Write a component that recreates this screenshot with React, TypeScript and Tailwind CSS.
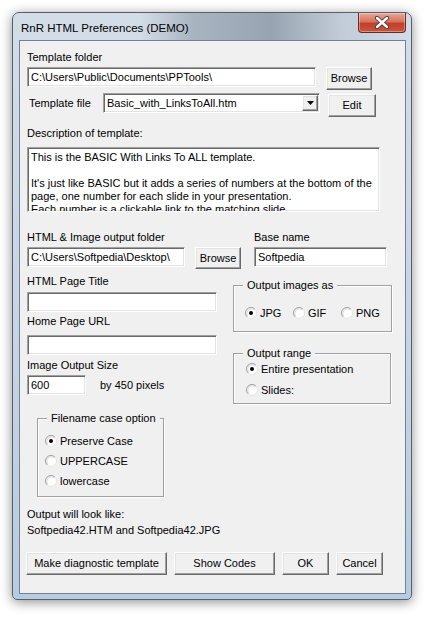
import React from "react";

const sunken =
  "bg-white border border-[#a0a0a0] border-r-white border-b-white shadow-[inset_1px_1px_0_#696969,inset_-1px_-1px_0_#e3e3e3]";
const raised =
  "bg-[#f0f0f0] border border-white border-r-[#696969] border-b-[#696969] shadow-[inset_-1px_-1px_0_#a0a0a0,inset_1px_1px_0_#e3e3e3] flex items-center justify-center text-black";
const etched = "border border-[#a0a0a0] shadow-[1px_1px_0_#ffffff,inset_1px_1px_0_#ffffff]";

function Radio({ checked, label }: { checked?: boolean; label: string }) {
  return (
    <div className="flex items-center gap-[3px] h-[14px]">
      <svg width="12" height="12" viewBox="0 0 12 12" className="shrink-0">
        <circle cx="6" cy="6" r="5.5" fill="#ffffff" stroke="#e3e3e3" />
        <path d="M2.1 9.9 A5.5 5.5 0 0 1 9.9 2.1" fill="none" stroke="#a0a0a0" />
        <path d="M2.9 9.1 A4.4 4.4 0 0 1 9.1 2.9" fill="none" stroke="#dcdcdc" />
        {checked && <circle cx="6" cy="6" r="2" fill="#000000" />}
      </svg>
      <span className="leading-[14px]">{label}</span>
    </div>
  );
}

function TextBox({ value, className }: { value?: string; className: string }) {
  return (
    <div className={`${sunken} ${className} flex items-center px-[3px] leading-[14px] overflow-hidden whitespace-nowrap`}>
      {value}
    </div>
  );
}

function Btn({ label, className }: { label: string; className: string }) {
  return <div className={`${raised} ${className}`}>{label}</div>;
}

function Group({ title, className, children }: { title: string; className: string; children: React.ReactNode }) {
  return (
    <div className={`relative ${etched} ${className}`}>
      <span className="absolute top-[-7px] left-[9px] px-[4px] bg-[#f0f0f0] leading-[13px]">{title}</span>
      {children}
    </div>
  );
}

export default function App() {
  return (
    <div className="w-[433px] h-[619px] bg-white overflow-hidden font-['Liberation_Sans',Arial,sans-serif] text-[11px] text-black">
      <div className="ml-[12px] mt-[12px] w-[400px] h-[588px] rounded-t-[7px] rounded-b-[5px] border border-[#53606e] bg-[linear-gradient(180deg,#d3dde8_0%,#c6d3e1_60%,#b9cbe0_100%)] shadow-[0_2px_12px_rgba(0,0,0,0.45)] flex flex-col">
        {/* title bar, with the blurred glass band behind it */}
        <div className="h-[27px] flex items-start rounded-t-[6px] bg-[linear-gradient(90deg,rgba(255,255,255,0)_0%,rgba(255,255,255,0)_32%,rgba(90,105,120,0.35)_45%,rgba(80,95,110,0.45)_65%,rgba(120,135,150,0.2)_82%,rgba(255,255,255,0)_100%)]">
          <span className="ml-[8px] mt-[8px] text-[11.5px] leading-[14px] text-black">
            RnR HTML Preferences (DEMO)
          </span>
          <div className="ml-auto mr-[5px] w-[48px] h-[20px] rounded-b-[4px] border border-[#6b2a20] border-t-0 bg-[linear-gradient(180deg,#e9a797_0%,#d8735d_45%,#c1402a_55%,#c9553c_100%)] shadow-[inset_0_0_0_1px_rgba(255,255,255,0.35)] flex items-center justify-center">
            <svg width="16" height="13" viewBox="0 0 16 13">
              <path d="M3 2 L13 11 M13 2 L3 11" stroke="#3b3b3b" strokeWidth="4.2" strokeLinecap="round" />
              <path d="M3 2 L13 11 M13 2 L3 11" stroke="#ffffff" strokeWidth="2.4" strokeLinecap="round" />
            </svg>
          </div>
        </div>

        {/* client area */}
        <div className="ml-[6px] w-[387px] h-[554px] border border-[#6f8297] bg-[#f0f0f0] pl-[7px] pt-[10px] flex flex-col">
          <div className="leading-[13px] h-[13px]">Template folder</div>
          <div className="flex items-start mt-[3px]">
            <TextBox value="C:\Users\Public\Documents\PPTools\" className="w-[289px] h-[20px]" />
            <Btn label="Browse" className="ml-[10px] w-[46px] h-[23px]" />
          </div>
          <div className="flex items-start mt-[3px]">
            <div className="w-[74px] ml-[2px] h-[20px] leading-[20px]">Template file</div>
            <div className={`${sunken} w-[217px] h-[20px] flex items-center`}>
              <span className="flex-1 pl-[3px] leading-[14px] whitespace-nowrap overflow-hidden">Basic_with_LinksToAll.htm</span>
              <div className={`${raised} w-[16px] h-[16px] mr-[1px]`}>
                <svg width="7" height="4" viewBox="0 0 7 4">
                  <path d="M0 0 L7 0 L3.5 4 Z" fill="#000000" />
                </svg>
              </div>
            </div>
            <Btn label="Edit" className="ml-[8px] mt-[1px] w-[48px] h-[23px]" />
          </div>

          <div className="mt-[10px] leading-[13px] h-[13px]">Description of template:</div>
          <div className={`${sunken} mt-[7px] w-[353px] h-[65px] overflow-hidden pl-[3px] pt-[3px] leading-[13px]`}>
            <div>This is the BASIC With Links To ALL template.</div>
            <div className="h-[13px]" />
            <div>It's just like BASIC but it adds a series of numbers at the bottom of the</div>
            <div>page, one number for each slide in your presentation.</div>
            <div>Each number is a clickable link to the matching slide.</div>
          </div>

          <div className="flex mt-[19px] leading-[13px] h-[13px]">
            <div className="w-[227px]">HTML &amp; Image output folder</div>
            <div>Base name</div>
          </div>
          <div className="flex items-start mt-[3px] h-[22px]">
            <TextBox value="C:\Users\Softpedia\Desktop\" className="w-[158px] h-[20px]" />
            <Btn label="Browse" className="ml-[10px] w-[46px] h-[22px]" />
            <TextBox value="Softpedia" className="ml-[13px] w-[133px] h-[20px]" />
          </div>

          <div className="flex items-start">
            {/* left column */}
            <div className="w-[190px] flex flex-col">
              <div className="mt-[6px] leading-[13px] h-[13px]">HTML Page Title</div>
              <TextBox className="mt-[4px] w-[190px] h-[20px]" />
              <div className="mt-[3px] leading-[13px] h-[13px]">Home Page URL</div>
              <TextBox className="mt-[7px] w-[190px] h-[20px]" />
              <div className="mt-[4px] leading-[13px] h-[13px]">Image Output Size</div>
              <div className="flex items-center mt-[3px]">
                <TextBox value="600" className="w-[59px] h-[20px]" />
                <span className="ml-[14px]">by 450 pixels</span>
              </div>
              <Group title="Filename case option" className="mt-[23px] ml-[10px] w-[127px] h-[79px] pl-[7px] pt-[15px] flex flex-col gap-[6px]">
                <Radio checked label="Preserve Case" />
                <Radio label="UPPERCASE" />
                <Radio label="lowercase" />
              </Group>
            </div>

            {/* right column */}
            <div className="ml-[16px] w-[159px] flex flex-col">
              <Group title="Output images as" className="mt-[16px] w-[159px] h-[47px] pl-[11px] pt-[20px] flex">
                <div className="w-[48px]">
                  <Radio checked label="JPG" />
                </div>
                <div className="w-[48px]">
                  <Radio label="GIF" />
                </div>
                <div>
                  <Radio label="PNG" />
                </div>
              </Group>
              <Group title="Output range" className="mt-[21px] w-[158px] h-[51px] pl-[12px] pt-[8px] flex flex-col gap-[7px]">
                <Radio checked label="Entire presentation" />
                <Radio label="Slides:" />
              </Group>
            </div>
          </div>

          <div className="mt-[9px] leading-[16px]">Output will look like:</div>
          <div className="leading-[16px]">Softpedia42.HTM and Softpedia42.JPG</div>

          <div className="flex mt-[14px] ml-[-1px] gap-[7px]">
            <Btn label="Make diagnostic template" className="w-[141px] h-[23px]" />
            <Btn label="Show Codes" className="w-[101px] h-[23px]" />
            <Btn label="OK" className="w-[47px] h-[23px]" />
            <Btn label="Cancel" className="w-[47px] h-[23px]" />
          </div>
        </div>
      </div>
    </div>
  );
}
